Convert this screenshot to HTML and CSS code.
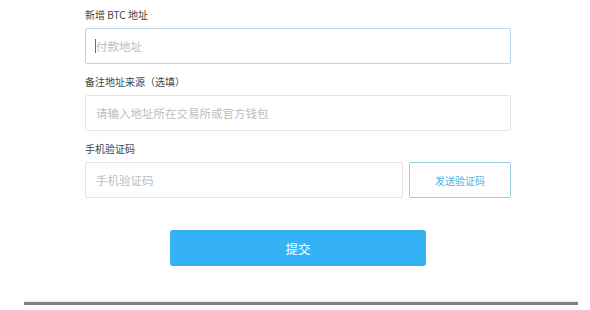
FILE: index.html
```html
<!DOCTYPE html>
<html lang="zh-CN">
<head>
    <meta charset="UTF-8">
    <meta name="viewport" content="width=device-width, initial-scale=1.0">
    <title>新增 BTC 地址</title>
    <link rel="stylesheet" href="styles.css">
</head>
<body>
    <form class="address-form" id="addressForm">
        <div class="form-group">
            <label for="address">新增 BTC 地址</label>
            <div class="field-wrap">
                <input type="text" id="address" class="is-focus" placeholder="付款地址">
                <span class="caret"></span>
            </div>
        </div>
        <div class="form-group">
            <label for="source">备注地址来源（选填）</label>
            <input type="text" id="source" placeholder="请输入地址所在交易所或官方钱包">
        </div>
        <div class="form-group">
            <label for="code">手机验证码</label>
            <div class="code-row">
                <input type="text" id="code" placeholder="手机验证码">
                <button type="button" class="btn-code">发送验证码</button>
            </div>
        </div>
        <div class="form-actions">
            <button type="submit" class="btn-submit">提交</button>
        </div>
    </form>
    <div class="page-rule"></div>
</body>
</html>
```

FILE: styles.css
```css
* {
    margin: 0;
    padding: 0;
    box-sizing: border-box;
}

body {
    font-family: "Noto Sans CJK SC", "Noto Sans", sans-serif;
    background: #fff;
    color: #333;
}

.address-form {
    width: 426px;
    margin-left: 85px;
    padding-top: 7px;
}

.form-group {
    margin-bottom: 10px;
}

label {
    display: block;
    font-size: 10px;
    line-height: 16px;
    margin-bottom: 5px;
    color: #444;
}

input {
    display: block;
    width: 100%;
    height: 36px;
    padding: 0 10px;
    border: 1px solid #e5e5e5;
    border-radius: 2px;
    font-family: inherit;
    font-size: 11.5px;
    color: #333;
    outline: none;
}

input::placeholder {
    color: #bdbdbd;
}

.field-wrap {
    position: relative;
}

input.is-focus {
    border-color: #b9d4ea;
}

/* text cursor shown in the focused field */
.caret {
    position: absolute;
    left: 10px;
    top: 11px;
    width: 1px;
    height: 14px;
    background: #666;
}

.code-row {
    display: flex;
    gap: 6px;
}

.code-row input {
    flex: 1;
}

.btn-code {
    width: 102px;
    height: 36px;
    flex-shrink: 0;
    background: #fff;
    border: 1px solid #9dd0e4;
    border-radius: 2px;
    color: #58b0de;
    font-family: inherit;
    font-size: 10px;
    cursor: pointer;
}

.form-actions {
    display: flex;
    justify-content: center;
    padding-top: 22px;
}

.btn-submit {
    width: 256px;
    height: 36px;
    background: #35b2f4;
    border: none;
    border-radius: 3px;
    color: #fff;
    font-family: inherit;
    font-size: 12.5px;
    cursor: pointer;
}

.page-rule {
    margin: 35px 12px 0 24px;
    height: 4px;
    border-top: 1px solid #ededed;
    background: #808080;
}
```
